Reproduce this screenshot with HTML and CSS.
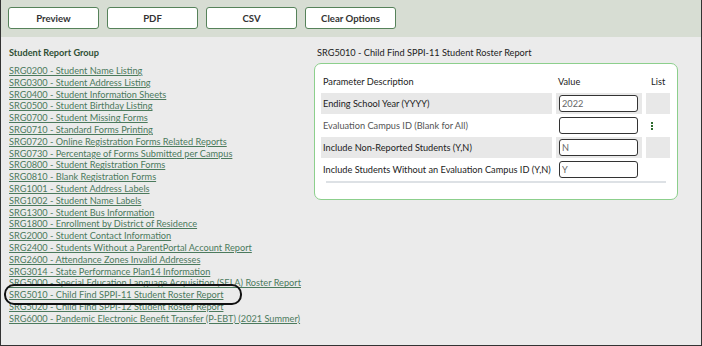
FILE: index.html
```html
<html>
	<head>
		<link rel="stylesheet" href="styles.css">
	</head>
	<body>
		<div class="frame">

			<div class="barraBotones">
				<button class="botonBarra">Preview</button>
				<button class="botonBarra">PDF</button>
				<button class="botonBarra">CSV</button>
				<button class="botonBarra">Clear Options</button>
			</div>

			<div class="contenido">

				<div class="columnaReportes">
					<div class="tituloGrupo">Student Report Group</div>
					<ul class="listaReportes">
						<li><a href="#">SRG0200 - Student Name Listing</a></li>
						<li><a href="#">SRG0300 - Student Address Listing</a></li>
						<li><a href="#">SRG0400 - Student Information Sheets</a></li>
						<li><a href="#">SRG0500 - Student Birthday Listing</a></li>
						<li><a href="#">SRG0700 - Student Missing Forms</a></li>
						<li><a href="#">SRG0710 - Standard Forms Printing</a></li>
						<li><a href="#">SRG0720 - Online Registration Forms Related Reports</a></li>
						<li><a href="#">SRG0730 - Percentage of Forms Submitted per Campus</a></li>
						<li><a href="#">SRG0800 - Student Registration Forms</a></li>
						<li><a href="#">SRG0810 - Blank Registration Forms</a></li>
						<li><a href="#">SRG1001 - Student Address Labels</a></li>
						<li><a href="#">SRG1002 - Student Name Labels</a></li>
						<li><a href="#">SRG1300 - Student Bus Information</a></li>
						<li><a href="#">SRG1800 - Enrollment by District of Residence</a></li>
						<li><a href="#">SRG2000 - Student Contact Information</a></li>
						<li><a href="#">SRG2400 - Students Without a ParentPortal Account Report</a></li>
						<li><a href="#">SRG2600 - Attendance Zones Invalid Addresses</a></li>
						<li><a href="#">SRG3014 - State Performance Plan14 Information</a></li>
						<li><a href="#">SRG5000 - Special Education Language Acquisition (SELA) Roster Report</a></li>
						<li class="marcado"><a href="#">SRG5010 - Child Find SPPI-11 Student Roster Report</a></li>
						<li><a href="#">SRG5020 - Child Find SPPI-12 Student Roster Report</a></li>
						<li><a href="#">SRG6000 - Pandemic Electronic Benefit Transfer (P-EBT) (2021 Summer)</a></li>
					</ul>
				</div>

				<div class="columnaParametros">
					<div class="tituloReporte">SRG5010 - Child Find SPPI-11 Student Roster Report</div>
					<div class="cajaParametros">
						<div class="fila filaTitulo">
							<div class="celda">Parameter Description</div>
							<div class="celda">Value</div>
							<div class="celda">List</div>
						</div>
						<div class="fila filaGris">
							<div class="celda">Ending School Year (YYYY)</div>
							<div class="celda"><input class="campo" type="text" value="2022"></div>
							<div class="celda"></div>
						</div>
						<div class="fila">
							<div class="celda descOpcional">Evaluation Campus ID (Blank for All)</div>
							<div class="celda"><input class="campo" type="text" value=""></div>
							<div class="celda"><span class="puntos"><i></i><i></i><i></i></span></div>
						</div>
						<div class="fila filaGris">
							<div class="celda">Include Non-Reported Students (Y,N)</div>
							<div class="celda"><input class="campo" type="text" value="N"></div>
							<div class="celda"></div>
						</div>
						<div class="fila filaUltima">
							<div class="celda">Include Students Without an Evaluation Campus ID (Y,N)</div>
							<div class="celda"><input class="campo" type="text" value="Y"></div>
							<div class="celda"></div>
						</div>
						<div class="lineaFinal"></div>
					</div>
				</div>

			</div>
		</div>
	</body>
</html>
```

FILE: styles.css
```css
body {
	margin: 0;
	font-family: "Lato", "Open Sans", sans-serif;
}

.frame {
	width: 700px;
	height: 345px;
	border-left: 1px solid #333;
	border-right: 1px solid #333;
	border-bottom: 1px solid #333;
	background-color: #ebebeb;
	overflow: hidden;
}

.barraBotones {
	background-color: #d7ddd3;
	height: 37px;
	box-sizing: border-box;
	padding-top: 7px;
	padding-left: 7px;
	display: flex;
	gap: 8px;
}

.botonBarra {
	width: 91px;
	height: 22px;
	background-color: #fff;
	border: 1px solid #56825a;
	border-radius: 3px;
	font-family: "Lato", sans-serif;
	font-size: 9.6px;
	font-weight: bold;
	color: #333;
	padding: 0;
}

.contenido {
	display: flex;
}

.columnaReportes {
	width: 305px;
	padding-left: 8px;
	padding-top: 10px;
}

.tituloGrupo {
	font-size: 9.2px;
	font-weight: bold;
	color: #2f4f35;
	height: 18px;
}

.listaReportes {
	list-style: none;
	margin: 0;
	padding: 0;
}

.listaReportes li {
	font-size: 9.2px;
	line-height: 11.8px;
	white-space: nowrap;
}

.listaReportes a {
	color: #4b7a5d;
	text-decoration: underline;
}

.marcado {
	position: relative;
}

.marcado::after {
	content: "";
	position: absolute;
	left: -5px;
	top: -5px;
	width: 234px;
	height: 17px;
	border: 2.5px solid #111;
	border-radius: 10px;
}

.columnaParametros {
	padding-top: 10px;
}

.tituloReporte {
	font-size: 9.2px;
	color: #222;
	padding-left: 3px;
	height: 16px;
}

.cajaParametros {
	width: 364px;
	height: 137px;
	box-sizing: border-box;
	background-color: #fff;
	border: 1px solid #8ccf8c;
	border-radius: 7px;
	padding: 7px 6px 0 6px;
	font-size: 9.2px;
	color: #222;
}

.fila {
	display: grid;
	grid-template-columns: 231px 86px 24px;
	column-gap: 4px;
	height: 21px;
	margin-bottom: 1px;
}

.celda {
	display: flex;
	align-items: center;
	padding-left: 2px;
	white-space: nowrap;
}

.filaTitulo {
	height: 20px;
	margin-bottom: 2px;
}

.filaTitulo .celda:nth-child(3) {
	padding-left: 5px;
}

.filaGris .celda {
	background-color: #e8e8e8;
}

.filaUltima {
	height: 20px;
}

.descOpcional {
	color: #555;
}

.campo {
	width: 79px;
	height: 17px;
	box-sizing: border-box;
	border: 1px solid #333;
	border-radius: 3px;
	font-family: "Lato", sans-serif;
	font-size: 9.2px;
	color: #666;
	padding: 0 2px;
	margin-left: 1px;
}

.puntos {
	display: flex;
	flex-direction: column;
	gap: 1px;
	margin-left: 3px;
}

.puntos i {
	display: block;
	width: 2px;
	height: 2px;
	background-color: #2e6b2e;
}

.lineaFinal {
	height: 2px;
	background-color: #dde1e5;
	margin: 2px 5px 0 5px;
}
```
